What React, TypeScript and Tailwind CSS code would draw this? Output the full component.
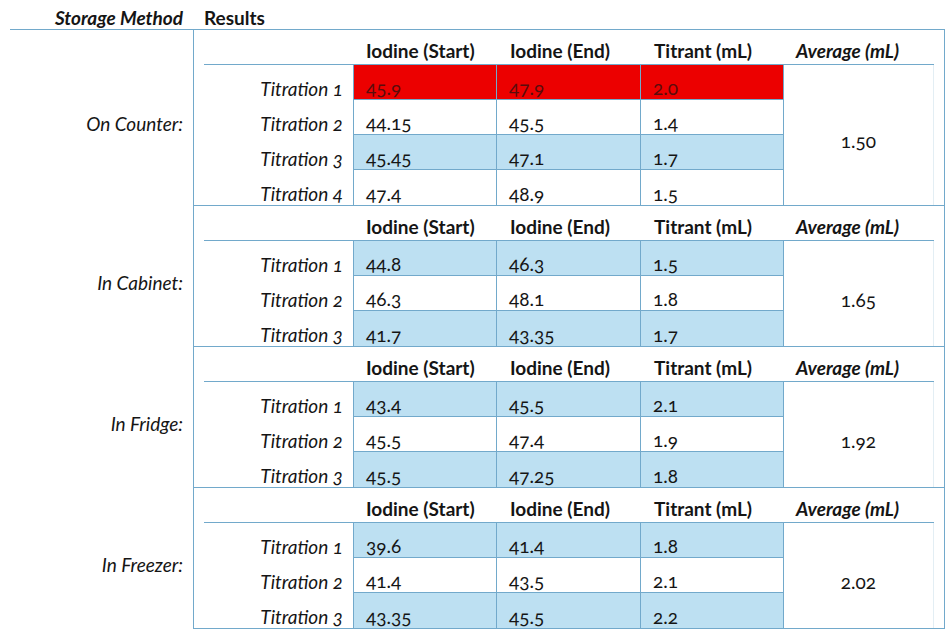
import React from "react";

type Row = { label: string; start: string; end: string; titrant: string; fill: "red" | "blue" | "white" };
type Group = { name: string; average: string; rows: Row[] };

const groups: Group[] = [
  {
    name: "On Counter:",
    average: "1.50",
    rows: [
      { label: "Titration 1", start: "45.9", end: "47.9", titrant: "2.0", fill: "red" },
      { label: "Titration 2", start: "44.15", end: "45.5", titrant: "1.4", fill: "white" },
      { label: "Titration 3", start: "45.45", end: "47.1", titrant: "1.7", fill: "blue" },
      { label: "Titration 4", start: "47.4", end: "48.9", titrant: "1.5", fill: "white" },
    ],
  },
  {
    name: "In Cabinet:",
    average: "1.65",
    rows: [
      { label: "Titration 1", start: "44.8", end: "46.3", titrant: "1.5", fill: "blue" },
      { label: "Titration 2", start: "46.3", end: "48.1", titrant: "1.8", fill: "white" },
      { label: "Titration 3", start: "41.7", end: "43.35", titrant: "1.7", fill: "blue" },
    ],
  },
  {
    name: "In Fridge:",
    average: "1.92",
    rows: [
      { label: "Titration 1", start: "43.4", end: "45.5", titrant: "2.1", fill: "blue" },
      { label: "Titration 2", start: "45.5", end: "47.4", titrant: "1.9", fill: "white" },
      { label: "Titration 3", start: "45.5", end: "47.25", titrant: "1.8", fill: "blue" },
    ],
  },
  {
    name: "In Freezer:",
    average: "2.02",
    rows: [
      { label: "Titration 1", start: "39.6", end: "41.4", titrant: "1.8", fill: "blue" },
      { label: "Titration 2", start: "41.4", end: "43.5", titrant: "2.1", fill: "white" },
      { label: "Titration 3", start: "43.35", end: "45.5", titrant: "2.2", fill: "blue" },
    ],
  },
];

const fillClass = {
  red: "bg-[#ec0000] text-[#5a0c0c]",
  blue: "bg-[#bde0f2]",
  white: "bg-white",
};

function GroupBlock({ group }: { group: Group }) {
  const n = group.rows.length;
  return (
    <div className="flex ml-[10px]">
      <div className="w-[183px] flex items-center justify-end pr-[10px] pt-[12px] italic">
        {group.name}
      </div>
      <div className="w-[752px] border-l border-r border-b border-[#72a9cb] pl-[10px] pr-[10px]">
        <div className="grid grid-cols-[149px_144px_144px_143px_150px]">
          <div className="h-[35px] border-b border-[#72a9cb]" />
          {["Iodine (Start)", "Iodine (End)", "Titrant (mL)"].map((h) => (
            <div key={h} className="h-[35px] border-b border-[#72a9cb] flex items-end pl-[13px] pb-[2px] font-bold whitespace-nowrap">
              {h}
            </div>
          ))}
          <div className="h-[35px] border-b border-[#72a9cb] flex items-end pl-[12px] pb-[2px] font-bold italic whitespace-nowrap">
            Average (mL)
          </div>

          {group.rows.map((r, i) => {
            const last = i === n - 1;
            const cell = `h-[35px] flex items-end pl-[12px] pb-0 border-r border-[#72a9cb] ${last ? "" : "border-b"} ${fillClass[r.fill]}`;
            return (
              <React.Fragment key={r.label}>
                <div className="h-[35px] flex items-end justify-end pr-[10px] pb-0 italic whitespace-nowrap">{r.label}</div>
                <div className={`${cell} border-l`}>{r.start}</div>
                <div className={cell}>{r.end}</div>
                <div className={cell}>{r.titrant}</div>
                {i === 0 && (
                  <div
                    className={`${n === 4 ? "row-span-4" : "row-span-3"} flex items-center justify-center pt-[12px] border-r border-[#e3eef4]`}
                  >
                    {group.average}
                  </div>
                )}
              </React.Fragment>
            );
          })}
        </div>
      </div>
    </div>
  );
}

export default function App() {
  return (
    <div className="w-[952px] h-[634px] bg-white text-[#151515] text-[19px] leading-[22px] font-['Lato','Open_Sans',sans-serif] oldstyle-nums overflow-hidden">
      <div className="flex h-[30px] ml-[10px] w-[935px] border-b border-[#72a9cb] items-end pb-0">
        <div className="w-[183px] pr-[10px] text-right font-bold italic whitespace-nowrap">Storage Method</div>
        <div className="pl-[11px] font-bold">Results</div>
      </div>
      {groups.map((g) => (
        <GroupBlock key={g.name} group={g} />
      ))}
    </div>
  );
}
